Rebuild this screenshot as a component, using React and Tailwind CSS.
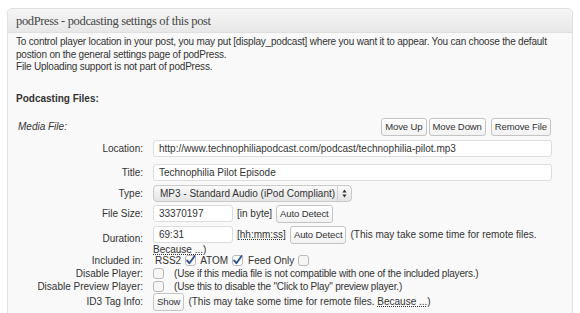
import React from 'react'

const font = { fontFamily: '"Liberation Sans", Arial, sans-serif' }

function Btn({ children, className = '' }) {
  return (
    <button className={`h-[18px] px-[3px] rounded-[3px] border border-[#c4c4c4] bg-gradient-to-b from-white to-[#f2f2f2] text-[9.5px] leading-none tracking-[-0.1px] text-[#333] ${className}`}>
      {children}
    </button>
  )
}

function Field({ value, className = '' }) {
  return (
    <div className={`h-[17px] rounded-[3px] border border-[#dcdcdc] bg-white px-[5px] text-[10px] leading-[15px] text-[#333] ${className}`}>
      {value}
    </div>
  )
}

function Check({ checked }) {
  return (
    <svg width="11" height="11" viewBox="0 0 11 11" className="shrink-0">
      <rect x="0.5" y="0.5" width="10" height="10" rx="2.5" fill={checked ? '#fff' : '#f6f6f6'} stroke="#b9b9b9" />
      {checked && <path d="M2.2 5.6 L4.4 8.2 L9.6 1" fill="none" stroke="#2f4f8f" strokeWidth="1.9" strokeLinecap="round" strokeLinejoin="round" />}
    </svg>
  )
}

function Row({ label, children, className = '' }) {
  return (
    <div className={`flex items-center ${className}`}>
      <div className="w-[127px] shrink-0 text-right">{label}</div>
      <div className="ml-[10px] flex items-center gap-[4px]">{children}</div>
    </div>
  )
}

export default function App() {
  return (
    <div className="w-[580px] h-[313px] bg-white overflow-hidden pt-[8px] pl-[7px]" style={font}>
      <div className="w-[566px] h-[320px] rounded-t-[5px] border border-[#dfdfdf] bg-[#f9f9f9] text-[10px] text-[#333]">
        <div className="h-[24px] rounded-t-[5px] border-b border-[#dfdfdf] bg-gradient-to-b from-[#f5f5f5] to-[#e8e8e8] pl-[8px] flex items-center">
          <h3 className="text-[12.5px] tracking-[-0.35px] text-[#464646] pt-[1px]" style={{ fontFamily: '"Liberation Serif", "Times New Roman", serif' }}>
            podPress - podcasting settings of this post
          </h3>
        </div>
        <div className="px-[8px]">
          <p className="pt-[3px] leading-[12.5px] tracking-[-0.2px] whitespace-nowrap">
            To control player location in your post, you may put [display_podcast] where you want it to appear. You can choose the default
            <br />postion on the general settings page of podPress.
            <br />File Uploading support is not part of podPress.
          </p>
          <p className="mt-[19px] font-bold leading-[12px]">Podcasting Files:</p>
          <div className="mt-[13px] flex items-center h-[18px]">
            <span className="italic ml-[2px]">Media File:</span>
            <div className="ml-auto mr-[13px] flex gap-[2px]">
              <Btn>Move Up</Btn>
              <Btn>Move Down</Btn>
              <Btn className="ml-[3px]">Remove File</Btn>
            </div>
          </div>
          <Row label="Location:" className="mt-[4px]">
            <Field value="http://www.technophiliapodcast.com/podcast/technophilia-pilot.mp3" className="w-[399px]" />
          </Row>
          <Row label="Title:" className="mt-[7px]">
            <Field value="Technophilia Pilot Episode" className="w-[399px]" />
          </Row>
          <Row label="Type:" className="mt-[4px]">
            <div className="w-[199px] h-[17px] rounded-[4px] border border-[#c9c9c9] bg-gradient-to-b from-[#fafafa] to-[#e4e4e4] flex items-center">
              <span className="flex-1 pl-[6px]">MP3 - Standard Audio (iPod Compliant)</span>
              <span className="h-full border-l border-[#cfcfcf] w-[14px] flex items-center justify-center">
                <svg width="5" height="9" viewBox="0 0 5 9">
                  <path d="M2.5 0.5 L4.6 3.6 L0.4 3.6 Z M2.5 8.5 L4.6 5.4 L0.4 5.4 Z" fill="#333" />
                </svg>
              </span>
            </div>
          </Row>
          <Row label="File Size:" className="mt-[3px]">
            <Field value="33370197" className="w-[80px]" />
            <span>[in byte]</span>
            <Btn>Auto Detect</Btn>
          </Row>
          <div className="flex items-start mt-[3px]">
            <div className="w-[127px] shrink-0 text-right pt-[5px]">Duration:</div>
            <div className="ml-[10px]">
              <div className="flex items-center gap-[4px]">
                <Field value="69:31" className="w-[80px]" />
                <span className="underline decoration-dotted">[hh:mm:ss]</span>
                <Btn>Auto Detect</Btn>
                <span>(This may take some time for remote files.</span>
              </div>
              <div className="leading-[11px]">
                <span className="underline decoration-dotted">Because ...</span>)
              </div>
            </div>
          </div>
          <Row label="Included in:" className="h-[12px]">
            <span className="ml-[2px]">RSS2</span>
            <Check checked />
            <span>ATOM</span>
            <Check checked />
            <span className="ml-[1px]">Feed Only</span>
            <Check />
          </Row>
          <Row label="Disable Player:" className="h-[13px]">
            <Check />
            <span className="ml-[6px] tracking-[-0.2px]">(Use if this media file is not compatible with one of the included players.)</span>
          </Row>
          <Row label="Disable Preview Player:" className="h-[13px]">
            <Check />
            <span className="ml-[6px] tracking-[-0.2px]">(Use this to disable the "Click to Play" preview player.)</span>
          </Row>
          <Row label="ID3 Tag Info:">
            <Btn className="h-[18px]">Show</Btn>
            <span>(This may take some time for remote files. <span className="underline decoration-dotted">Because ...</span>)</span>
          </Row>
        </div>
      </div>
    </div>
  )
}
